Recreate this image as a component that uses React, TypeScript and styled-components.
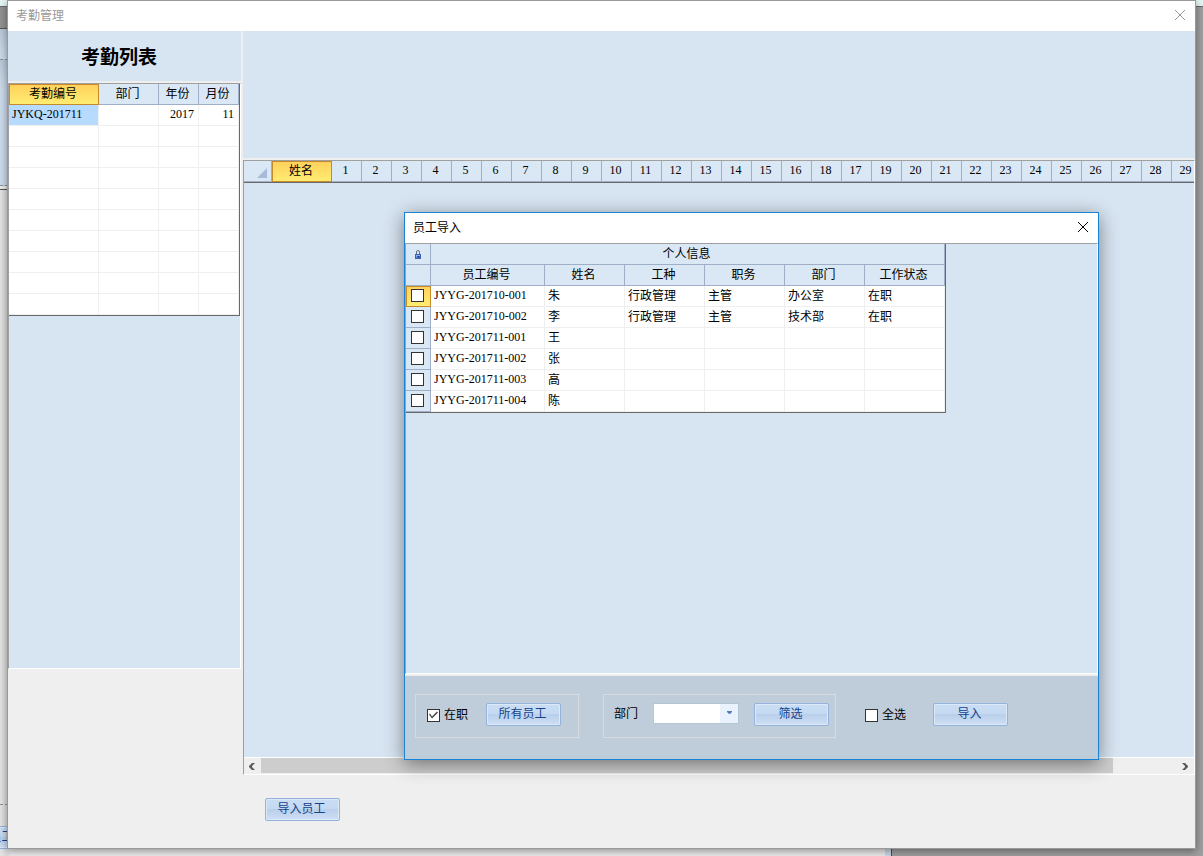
import React from "react";
import styled, { createGlobalStyle, css } from "styled-components";

const color = {
  pane: "#d7e4f1",
  head: "#dae7f5",
  headLine: "#a0afc8",
  line: "#efefef",
  edge: "#a0a0a0",
  dark: "#696969",
  chrome: "#efefef",
  text: "#000",
};

const GlobalStyle = createGlobalStyle`
  * { box-sizing: border-box; }
  body {
    margin: 0;
    color: ${color.text};
    font-family: "Liberation Serif", "Noto Sans CJK SC", serif;
    font-size: 12px;
    line-height: 18px;
  }
  button, input, select { font: inherit; margin: 0; }
`;

/* ---------- desktop behind the windows ---------- */

const Desktop = styled.div`
  position: relative;
  min-height: 100vh;
  display: flex;
  flex-direction: column;
  overflow: hidden;
  background: #9f9f9f;
`;

const Backdrop = styled.div`
  position: absolute;
  inset: 0;
  display: flex;
  flex-direction: column;
`;

const BackRuler = styled.div`
  height: 7px;
  background: #e6f6f5;
  border-bottom: 1px solid ${color.dark};
`;

const BackColumns = styled.div`
  flex: 1;
  display: flex;
`;

const BackSheet = styled.div`
  width: calc(100% - 311px);
  display: flex;
  flex-direction: column;
  background: #ececec;
  border-right: 1px solid #4c4c4c;
`;

const BackTitle = styled.div`
  height: 22px;
  background: #929292;
  border-bottom: 1px solid #555;
`;

const BackBand = styled.div<{ $height: number }>`
  height: ${(p) => p.$height}px;
  background: linear-gradient(#b9c8d9, #cddcec 30px);
  border-bottom: 1px dashed #909090;
`;

const BackBody = styled.div`
  flex: 1;
  display: flex;
  flex-direction: column;
  justify-content: flex-end;
  margin-top: 3px;
  padding-bottom: 7px;
  border-top: 1px solid #555;
  border-right: 6px solid #cbd8e6;
  background: linear-gradient(90deg, #e4e4e4, #dcdcdc 7px, #ececec 12px);
`;

const BackFooter = styled.div`
  padding-top: 21px;
  border-top: 1px dashed #909090;
`;

/* ---------- main window ---------- */

const Window = styled.main`
  position: relative;
  flex: 1;
  display: flex;
  flex-direction: column;
  margin: 0 7px 7px;
  border: 1px solid #999;
  background: ${color.chrome};
  box-shadow: 0 2px 8px rgba(0, 0, 0, 0.4);
`;

const TitleBar = styled.header<{ $active?: boolean }>`
  flex: none;
  display: flex;
  align-items: center;
  justify-content: space-between;
  height: 30px;
  padding: 0 8px 2px;
  background: #fff;
  color: ${(p) => (p.$active ? "#000" : "#999")};
  font-family: "Noto Sans CJK SC", sans-serif;
`;

const CloseButton = styled.button`
  display: flex;
  padding: 1px;
  border: 0;
  background: none;
  color: inherit;
`;

const Columns = styled.div`
  flex: 1;
  display: flex;
  gap: 2px;
`;

const Sidebar = styled.section`
  flex: 0 0 233px;
  display: flex;
  flex-direction: column;
  gap: 2px;
  padding-bottom: 179px;
`;

const Heading = styled.h1`
  display: flex;
  align-items: center;
  justify-content: center;
  height: 50px;
  margin: 0;
  padding: 0 11px 0 0;
  background: ${color.pane};
  font: bold 19px/28px "Noto Sans CJK SC", sans-serif;
`;

const Sunken = styled.div`
  flex: 1;
  display: flex;
  flex-direction: column;
  align-items: flex-start;
  border: 1px solid;
  border-color: ${color.edge} #fff #fff ${color.edge};
  background: ${color.pane};
  min-width: 0;
  overflow: hidden;
`;

const Content = styled.section`
  flex: 1;
  min-width: 0;
  display: flex;
  flex-direction: column;
  gap: 2px;
`;

const Banner = styled.div`
  height: 127px;
  background: ${color.pane};
`;

const DayHead = styled.div`
  align-self: stretch;
  overflow: hidden;
  border-bottom: 1px solid ${color.dark};
`;

const DayArea = styled.div`
  flex: 1;
`;

const Footer = styled.footer`
  height: 71px;
  padding: 21px 22px;
`;

/* ---------- tables ---------- */

const Table = styled.table<{ $framed?: boolean; $width: number }>`
  width: ${(p) => p.$width}px;
  table-layout: fixed;
  border-collapse: separate;
  border-spacing: 0;
  background: #fff;
  ${(p) =>
    p.$framed &&
    css`
      border: solid ${color.dark};
      border-width: 0 1px 1px 0;
    `}
`;

const gold = css`
  padding-bottom: 1px;
  border: 1px solid #c58a2b;
  background: linear-gradient(#ffd15c, #ffec72);
`;

const Th = styled.th<{ $gold?: boolean; $latin?: boolean }>`
  height: 21px;
  padding: 0 2px ${(p) => (p.$latin ? 2 : 0)}px 0;
  border: solid ${color.headLine};
  border-width: 0 1px 1px 0;
  background: ${color.head};
  font-weight: normal;
  text-align: center;
  vertical-align: middle;
  ${(p) => p.$gold && gold}
`;

const Td = styled.td<{ $selected?: boolean; $right?: boolean; $latin?: boolean }>`
  height: 21px;
  padding: 0 4px ${(p) => (p.$latin ? 2 : 0)}px 3px;
  border: solid ${color.line};
  border-width: 0 1px 1px 0;
  background: ${(p) => (p.$selected ? "#b7daff" : "#fff")};
  text-align: ${(p) => (p.$right ? "right" : "left")};
  white-space: nowrap;
`;

const RowHead = styled(Th)`
  padding: 0 2px 2px 0;
  line-height: 0;
`;

const LockCell = styled(Th)`
  padding: 0;
  line-height: 0;
`;

const CornerCell = styled(Th)`
  padding: 4px 4px 0 0;
  line-height: 0;
  text-align: right;
`;

/* ---------- scrollbar ---------- */

const ScrollBar = styled.div`
  align-self: stretch;
  display: flex;
  height: 17px;
  border-top: 1px solid #fff;
  background: ${color.chrome};
`;

const ScrollButton = styled.button`
  flex: 0 0 17px;
  display: flex;
  align-items: center;
  justify-content: center;
  padding: 0 1px 0 0;
  border: 0;
  background: none;
`;

const Track = styled.div`
  flex: 1;
  padding-bottom: 1px;
`;

const Thumb = styled.div`
  width: 93%;
  height: 100%;
  background: #cdcdcd;
`;

/* ---------- controls ---------- */

const Button = styled.button`
  flex: none;
  width: 75px;
  height: 23px;
  padding: 0 2px 1px 0;
  border: 1px solid #93b3dd;
  border-radius: 2px;
  background: linear-gradient(#c9ddf4, #c5daf2 45%, #b9cfea 50%, #cfdff5);
  box-shadow: inset 0 0 0 1px #dce9f9;
  color: #15428b;
  line-height: 18px;
  text-align: center;
`;

/* the button of the window behind, mostly beyond the left edge */
const BackButton = styled(Button)`
  margin-left: -47px;
`;

const Check = styled.input.attrs({ type: "checkbox" })`
  appearance: none;
  display: inline-block;
  flex: none;
  width: 13px;
  height: 13px;
  border: 1px solid #333;
  background: #fff;
  vertical-align: middle;

  &:checked::after {
    content: "";
    display: block;
    width: 11px;
    height: 11px;
    background: #444;
    clip-path: polygon(1px 5px, 2px 4px, 4px 7px, 9px 2px, 10px 3px, 4px 9px);
  }
`;

const CheckLabel = styled.label`
  display: flex;
  align-items: center;
  gap: 4px;
  padding-top: 2px;
`;

const SelectBox = styled.span`
  position: relative;
  display: flex;
  width: 86px;
  height: 21px;
  margin-bottom: 2px;

  svg {
    position: absolute;
    right: 7px;
    top: 8px;
    pointer-events: none;
  }
`;

const Select = styled.select`
  appearance: none;
  width: 100%;
  padding: 0 20px 0 3px;
  border: 1px solid #b3c7d3;
  border-radius: 0;
  background: linear-gradient(90deg, #fff 66px, #eaf2fd 66px);
`;

/* ---------- dialog ---------- */

const Dialog = styled.section`
  position: absolute;
  top: 211px;
  left: 396px;
  width: 695px;
  display: flex;
  flex-direction: column;
  border: 1px solid #1883d7;
  background: ${color.chrome};
  box-shadow: 0 4px 18px rgba(0, 0, 0, 0.45);
`;

const DialogBody = styled(Sunken)`
  min-height: 431px;
`;

const Toolbar = styled.form`
  display: flex;
  align-items: center;
  height: 83px;
  margin-top: 2px;
  padding: 0 10px 3px;
  background: #bfccd9;
`;

const Group = styled.div<{ $gap: number }>`
  display: flex;
  align-items: center;
  gap: ${(p) => p.$gap}px;
  height: 44px;
  padding: 0 17px 4px 11px;
  border: 1px solid #d8dbde;

  & + & {
    margin-left: 24px;
    padding: 0 6px 4px 10px;
  }
`;

const Loose = styled.div`
  display: flex;
  align-items: center;
  gap: 27px;
  margin-left: 29px;
  padding-bottom: 4px;
`;

const CloseIcon = () => (
  <svg width="12" height="12" viewBox="0 0 12 12" stroke="currentColor" fill="none" aria-hidden="true">
    <path d="M1 1L11 11M11 1L1 11" />
  </svg>
);

const LockIcon = () => (
  <svg width="8" height="9" viewBox="0 0 8 9" aria-hidden="true">
    <path d="M2.5 4V2a1.5 1.5 0 0 1 3 0v2" fill="none" stroke="#666e80" />
    <rect x="1" y="4" width="6" height="5" fill="#3d63b8" />
    <rect x="2" y="5" width="4" height="1" fill="#8fb0ea" />
    <rect x="2" y="6" width="1" height="2" fill="#6f95de" />
    <rect x="4" y="6" width="1" height="1" fill="#1b347c" />
  </svg>
);

const CornerIcon = () => (
  <svg width="10" height="10" viewBox="0 0 10 10" aria-hidden="true">
    <path d="M10 0V10H0Z" fill="#a9bad8" />
  </svg>
);

const Chevron = ({ flip = false }: { flip?: boolean }) => (
  <svg width="6" height="7" viewBox="0 0 6 7" aria-hidden="true">
    <path d={flip ? "M0 0H3L6 3V4L3 7H0L3 4V3Z" : "M6 0H3L0 3V4L3 7H6L3 4V3Z"} fill="#5a5a5a" />
  </svg>
);

const days = [1, 2, 3, 4, 5, 6, 7, 8, 9, 10, 11, 12, 13, 14, 15, 16, 18, 17, 19, 20, 21, 22, 23, 24, 25, 26, 27, 28, 29];

const staff = [
  ["JYYG-201710-001", "朱", "行政管理", "主管", "办公室", "在职"],
  ["JYYG-201710-002", "李", "行政管理", "主管", "技术部", "在职"],
  ["JYYG-201711-001", "王", "", "", "", ""],
  ["JYYG-201711-002", "张", "", "", "", ""],
  ["JYYG-201711-003", "高", "", "", "", ""],
  ["JYYG-201711-004", "陈", "", "", "", ""],
];

const Cols = ({ widths }: { widths: number[] }) => (
  <colgroup>
    {widths.map((w, i) => (
      <col key={i} width={w} />
    ))}
  </colgroup>
);

const AttendanceTable = () => (
  <Table $framed $width={231}>
    <Cols widths={[90, 60, 40, 40]} />
    <thead>
      <tr>
        <Th $gold>考勤编号</Th>
        <Th>部门</Th>
        <Th>年份</Th>
        <Th>月份</Th>
      </tr>
    </thead>
    <tbody>
      <tr>
        <Td $selected $latin>JYKQ-201711</Td>
        <Td />
        <Td $right $latin>2017</Td>
        <Td $right $latin>11</Td>
      </tr>
      {Array.from({ length: 9 }, (_, i) => (
        <tr key={i}>
          <Td />
          <Td />
          <Td />
          <Td />
        </tr>
      ))}
    </tbody>
  </Table>
);

const DayTable = () => (
  <Table $width={88 + days.length * 30}>
    <Cols widths={[28, 60, ...days.map(() => 30)]} />
    <thead>
      <tr>
        <CornerCell>
          <CornerIcon />
        </CornerCell>
        <Th $gold>姓名</Th>
        {days.map((d) => (
          <Th key={d} $latin>{d}</Th>
        ))}
      </tr>
    </thead>
  </Table>
);

const StaffTable = () => (
  <Table $framed $width={540}>
    <Cols widths={[25, 114, 80, 80, 80, 80, 80]} />
    <thead>
      <tr>
        <LockCell>
          <LockIcon />
        </LockCell>
        <Th colSpan={6}>个人信息</Th>
      </tr>
      <tr>
        <Th />
        {["员工编号", "姓名", "工种", "职务", "部门", "工作状态"].map((h) => (
          <Th key={h}>{h}</Th>
        ))}
      </tr>
    </thead>
    <tbody>
      {staff.map((row, r) => (
        <tr key={row[0]}>
          <RowHead $gold={r === 0} scope="row">
            <Check aria-label={row[0]} />
          </RowHead>
          {row.map((cell, i) => (
            <Td key={i} $latin={i === 0}>{cell}</Td>
          ))}
        </tr>
      ))}
    </tbody>
  </Table>
);

const ImportDialog = () => (
  <Dialog role="dialog" aria-label="员工导入">
    <TitleBar $active>
      <span>员工导入</span>
      <CloseButton aria-label="关闭">
        <CloseIcon />
      </CloseButton>
    </TitleBar>
    <DialogBody>
      <StaffTable />
    </DialogBody>
    <Toolbar>
      <Group $gap={18}>
        <CheckLabel>
          <Check defaultChecked />
          在职
        </CheckLabel>
        <Button type="button">所有员工</Button>
      </Group>
      <Group $gap={15}>
        <label htmlFor="dept">部门</label>
        <SelectBox>
          <Select id="dept">
            <option value="" />
            <option>办公室</option>
            <option>技术部</option>
          </Select>
          <svg width="5" height="3" viewBox="0 0 5 3" aria-hidden="true">
            <path d="M0 0H5V1L3 3H2L0 1Z" fill="#4f7fbd" />
          </svg>
        </SelectBox>
        <Button type="button">筛选</Button>
      </Group>
      <Loose>
        <CheckLabel>
          <Check />
          全选
        </CheckLabel>
        <Button type="button">导入</Button>
      </Loose>
    </Toolbar>
  </Dialog>
);

export default function App() {
  return (
    <Desktop>
      <GlobalStyle />
      <Backdrop aria-hidden="true">
        <BackRuler />
        <BackColumns>
          <BackSheet>
            <BackTitle />
            <BackBand $height={31} />
            <BackBand $height={126} />
            <BackBody>
              <BackFooter>
                <BackButton tabIndex={-1}>导入员工</BackButton>
              </BackFooter>
            </BackBody>
          </BackSheet>
        </BackColumns>
      </Backdrop>
      <Window>
        <TitleBar>
          <span>考勤管理</span>
          <CloseButton aria-label="关闭">
            <CloseIcon />
          </CloseButton>
        </TitleBar>
        <Columns>
          <Sidebar>
            <Heading>考勤列表</Heading>
            <Sunken>
              <AttendanceTable />
            </Sunken>
          </Sidebar>
          <Content>
            <Banner />
            <Sunken>
              <DayHead>
                <DayTable />
              </DayHead>
              <DayArea />
              <ScrollBar>
                <ScrollButton aria-label="向左滚动">
                  <Chevron />
                </ScrollButton>
                <Track>
                  <Thumb />
                </Track>
                <ScrollButton aria-label="向右滚动">
                  <Chevron flip />
                </ScrollButton>
              </ScrollBar>
            </Sunken>
            <Footer>
              <Button>导入员工</Button>
            </Footer>
          </Content>
        </Columns>
        <ImportDialog />
      </Window>
    </Desktop>
  );
}
